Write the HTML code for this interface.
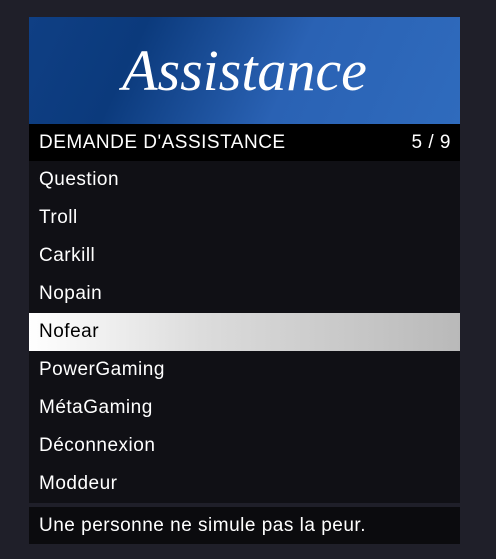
<!DOCTYPE html>
<html><head><meta charset="utf-8"><style>
html,body{margin:0;padding:0}
body{width:496px;height:559px;background:#1f1f29;position:relative;overflow:hidden;font-family:"Liberation Sans",Arial,sans-serif}
.p{position:absolute;left:29px;width:431px}
.banner{top:17px;height:107px;background:linear-gradient(115deg,#0f3f84 0%,#0b3a7c 25%,#2a62b4 60%,#2f6bbd 100%);}
.banner span{position:absolute;left:0;right:0;top:20px;text-align:center;color:#fff;font-family:"Liberation Serif",serif;font-style:italic;font-size:58px}
.head{top:124px;height:37px;background:#000;color:#fff;font-size:19px;letter-spacing:0.5px;line-height:37px}
.list{top:161px;height:342px;background:#101015}
.row{height:38px;line-height:37px;color:#fff;font-size:19px;letter-spacing:0.5px;padding-left:10px}
.sel{background:linear-gradient(90deg,#fff 0%,#dcdcdc 40%,#b9b9b9 100%);color:#000}
.desc{top:507px;height:37px;background:#0b0b0e;color:#fff;font-size:19px;letter-spacing:0.5px;line-height:37px;padding-left:10px;box-sizing:border-box}
</style></head><body>
<div class="p banner"><span>Assistance</span></div>
<div class="p head"><span style="position:absolute;left:10px">DEMANDE D'ASSISTANCE</span><span style="position:absolute;right:9px">5 / 9</span></div>
<div class="p list">
<div class="row">Question</div>
<div class="row">Troll</div>
<div class="row">Carkill</div>
<div class="row">Nopain</div>
<div class="row sel">Nofear</div>
<div class="row">PowerGaming</div>
<div class="row">MétaGaming</div>
<div class="row">Déconnexion</div>
<div class="row">Moddeur</div>
</div>
<div class="p desc">Une personne ne simule pas la peur.</div>
</body></html>
